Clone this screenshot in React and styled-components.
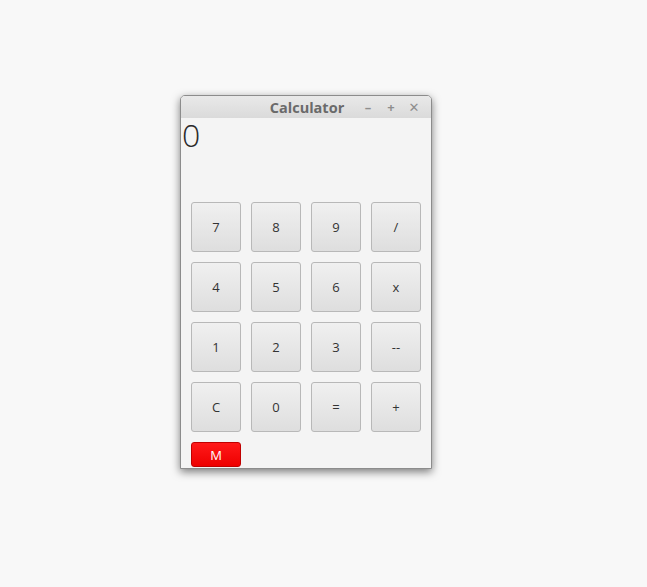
import React from 'react'
import styled, { createGlobalStyle } from 'styled-components'

const Global = createGlobalStyle`
  html, body {
    margin: 0;
    background: #f8f8f8;
    font-family: "Open Sans", "DejaVu Sans", sans-serif;
  }
`

const keys = [
  ['7', '8', '9', '/'],
  ['4', '5', '6', 'x'],
  ['1', '2', '3', '--'],
  ['C', '0', '=', '+'],
]

function App() {
  return (
    <>
      <Global />
      <Page>
        <Window>
          <TitleBar>
            <Title>Calculator</Title>
            <Controls>
              <Ctrl>–</Ctrl>
              <Ctrl>+</Ctrl>
              <Ctrl>✕</Ctrl>
            </Controls>
          </TitleBar>
          <Body>
            <Display>0</Display>
            <Keypad>
              {keys.flat().map((k) => (
                <Key key={k}>{k}</Key>
              ))}
            </Keypad>
            <MemoryRow>
              <MemKey>M</MemKey>
            </MemoryRow>
          </Body>
        </Window>
      </Page>
    </>
  )
}

export default App

const Page = styled.div`
  height: 587px;
  padding: 95px 0 0 180px;
  box-sizing: border-box;
`

const Window = styled.div`
  width: 252px;
  height: 374px;
  box-sizing: border-box;
  border: 1px solid #8c8c8c;
  border-radius: 5px 5px 0 0;
  background: #f4f4f4;
  box-shadow: 0 3px 8px rgba(0, 0, 0, 0.5);
  overflow: hidden;
  display: flex;
  flex-direction: column;
`

const TitleBar = styled.div`
  height: 22px;
  flex-shrink: 0;
  background: linear-gradient(#e9e9e9, #dadada);
  display: flex;
  align-items: center;
`

const Title = styled.div`
  flex: 1;
  text-align: center;
  padding-left: 72px;
  font-weight: bold;
  font-size: 14.5px;
  color: #6a6a6a;
`

const Controls = styled.div`
  display: flex;
  gap: 9px;
  padding-right: 10px;
`

const Ctrl = styled.span`
  width: 14px;
  text-align: center;
  font-size: 13px;
  font-weight: bold;
  color: #8e8e8e;
`

const Body = styled.div`
  flex: 1;
  display: flex;
  flex-direction: column;
  padding: 0 10px;
`

const Display = styled.div`
  height: 84px;
  margin-left: -9px;
  font-size: 32px;
  font-weight: 300;
  line-height: 34px;
  color: #2a2a2a;
`

const Keypad = styled.div`
  display: grid;
  grid-template-columns: repeat(4, 50px);
  grid-auto-rows: 50px;
  gap: 10px;
`

const Key = styled.button`
  box-sizing: border-box;
  border: 1px solid #b8b8b8;
  border-radius: 3px;
  background: linear-gradient(#f0f0f0, #dedede);
  font-family: "Open Sans", "DejaVu Sans", sans-serif;
  font-size: 13px;
  color: #333;
  padding: 0;
  cursor: pointer;
`

const MemoryRow = styled.div`
  margin-top: 10px;
  display: flex;
`

const MemKey = styled.button`
  width: 50px;
  height: 25px;
  box-sizing: border-box;
  border: 1px solid #c00000;
  border-radius: 3px;
  background: linear-gradient(#ff1a1a, #ee0000);
  color: #fff;
  font-family: "Open Sans", "DejaVu Sans", sans-serif;
  font-size: 13px;
  padding: 0;
`
